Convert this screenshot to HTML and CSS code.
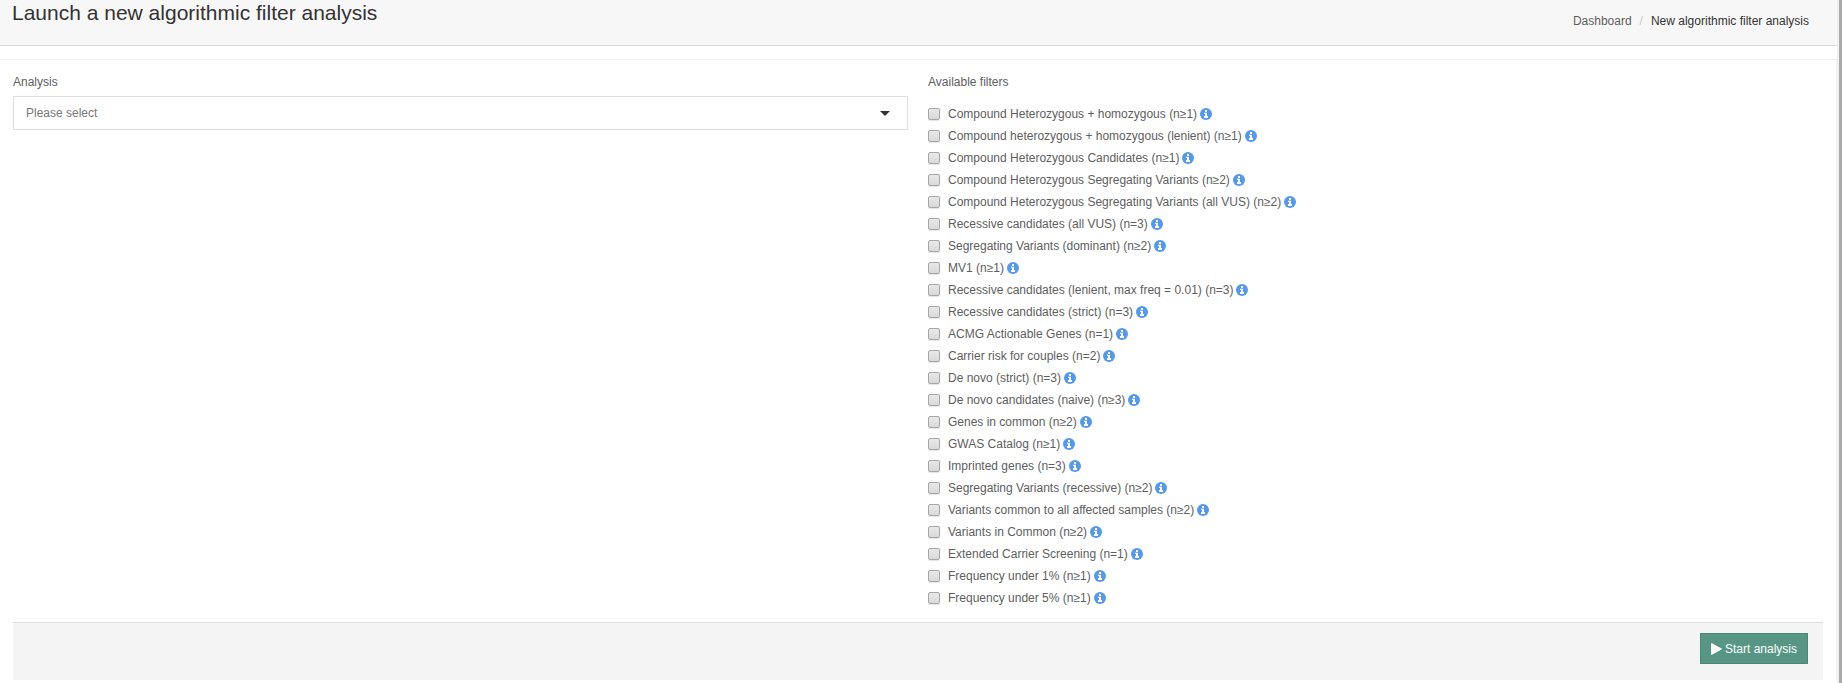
FILE: index.html
```html
<!DOCTYPE html>
<html lang="en">
<head>
    <meta charset="UTF-8">
    <meta name="viewport" content="width=device-width, initial-scale=1.0">
    <title>New algorithmic filter analysis</title>
    <link rel="stylesheet" href="styles.css">
</head>
<body>
    <!-- Info icon shared by all filters -->
    <svg class="sprite" aria-hidden="true">
        <symbol id="info" viewBox="0 0 12 12">
            <circle cx="6" cy="6" r="6" fill="#5499f0"/>
            <path fill="#fff" d="M5 2h2v2H5zM4 4.700h3v3.300h1v2H4V8h1V6H4z"/>
        </symbol>
    </svg>

    <div class="page">
        <header class="page-header">
            <h1>Launch a new algorithmic filter analysis</h1>
            <nav class="breadcrumb">
                <a href="#">Dashboard</a>
                <span class="separator">/</span>
                <span class="active">New algorithmic filter analysis</span>
            </nav>
        </header>

        <form class="panel" action="#" method="POST">
            <div class="columns">
                <!-- Analysis Section -->
                <div class="column">
                    <label class="title" for="analysis">Analysis</label>
                    <div class="select-box">
                        <select id="analysis" name="analysis">
                            <option value="">Please select</option>
                        </select>
                        <svg class="caret" viewBox="0 0 10 5" aria-hidden="true"><path d="M0 0h10L5 5z"/></svg>
                    </div>
                </div>

                <!-- Filters Section -->
                <fieldset class="column">
                    <legend class="title">Available filters</legend>
                    <ul class="filters">
                        <li><label><input type="checkbox" name="filter"> Compound Heterozygous + homozygous (n≥1)</label><svg class="info"><use href="#info"/></svg></li>
                        <li><label><input type="checkbox" name="filter"> Compound heterozygous + homozygous (lenient) (n≥1)</label><svg class="info"><use href="#info"/></svg></li>
                        <li><label><input type="checkbox" name="filter"> Compound Heterozygous Candidates (n≥1)</label><svg class="info"><use href="#info"/></svg></li>
                        <li><label><input type="checkbox" name="filter"> Compound Heterozygous Segregating Variants (n≥2)</label><svg class="info"><use href="#info"/></svg></li>
                        <li><label><input type="checkbox" name="filter"> Compound Heterozygous Segregating Variants (all VUS) (n≥2)</label><svg class="info"><use href="#info"/></svg></li>
                        <li><label><input type="checkbox" name="filter"> Recessive candidates (all VUS) (n=3)</label><svg class="info"><use href="#info"/></svg></li>
                        <li><label><input type="checkbox" name="filter"> Segregating Variants (dominant) (n≥2)</label><svg class="info"><use href="#info"/></svg></li>
                        <li><label><input type="checkbox" name="filter"> MV1 (n≥1)</label><svg class="info"><use href="#info"/></svg></li>
                        <li><label><input type="checkbox" name="filter"> Recessive candidates (lenient, max freq = 0.01) (n=3)</label><svg class="info"><use href="#info"/></svg></li>
                        <li><label><input type="checkbox" name="filter"> Recessive candidates (strict) (n=3)</label><svg class="info"><use href="#info"/></svg></li>
                        <li><label><input type="checkbox" name="filter"> ACMG Actionable Genes (n=1)</label><svg class="info"><use href="#info"/></svg></li>
                        <li><label><input type="checkbox" name="filter"> Carrier risk for couples (n=2)</label><svg class="info"><use href="#info"/></svg></li>
                        <li><label><input type="checkbox" name="filter"> De novo (strict) (n=3)</label><svg class="info"><use href="#info"/></svg></li>
                        <li><label><input type="checkbox" name="filter"> De novo candidates (naive) (n≥3)</label><svg class="info"><use href="#info"/></svg></li>
                        <li><label><input type="checkbox" name="filter"> Genes in common (n≥2)</label><svg class="info"><use href="#info"/></svg></li>
                        <li><label><input type="checkbox" name="filter"> GWAS Catalog (n≥1)</label><svg class="info"><use href="#info"/></svg></li>
                        <li><label><input type="checkbox" name="filter"> Imprinted genes (n=3)</label><svg class="info"><use href="#info"/></svg></li>
                        <li><label><input type="checkbox" name="filter"> Segregating Variants (recessive) (n≥2)</label><svg class="info"><use href="#info"/></svg></li>
                        <li><label><input type="checkbox" name="filter"> Variants common to all affected samples (n≥2)</label><svg class="info"><use href="#info"/></svg></li>
                        <li><label><input type="checkbox" name="filter"> Variants in Common (n≥2)</label><svg class="info"><use href="#info"/></svg></li>
                        <li><label><input type="checkbox" name="filter"> Extended Carrier Screening (n=1)</label><svg class="info"><use href="#info"/></svg></li>
                        <li><label><input type="checkbox" name="filter"> Frequency under 1% (n≥1)</label><svg class="info"><use href="#info"/></svg></li>
                        <li><label><input type="checkbox" name="filter"> Frequency under 5% (n≥1)</label><svg class="info"><use href="#info"/></svg></li>
                    </ul>
                </fieldset>
            </div>

            <div class="form-actions">
                <button type="submit" class="btn">
                    <svg class="play" viewBox="0 0 11 12" aria-hidden="true"><path d="M0 .7Q0-.3 1 .2l9.500 5.200q.9.600 0 1.200L1 11.800q-1 .5-1-.5z"/></svg>
                    Start analysis
                </button>
            </div>
        </form>
    </div>
</body>
</html>
```

FILE: styles.css
```css
* {
    box-sizing: border-box;
}

body {
    margin: 0;
    min-height: 100vh;
    display: flex;
    font-family: "Liberation Sans", Arial, sans-serif;
    font-size: 12px;
    line-height: 18px;
    color: #5e5e5e;
    background-color: #f0f0f0;
    border-right: 3px solid #a9a9a9;
}

.sprite {
    position: absolute;
    width: 0;
    height: 0;
}

.page {
    flex: 1;
    margin-right: 2px;
    background-color: #fff;
}

/* Header */
.page-header {
    display: flex;
    justify-content: space-between;
    height: 46px;
    padding: 0 28px 0 12px;
    background-color: #f7f7f7;
    border-bottom: 1px solid #dcdcdc;
}

.page-header h1 {
    margin: 0;
    font-size: 21px;
    font-weight: normal;
    line-height: 26px;
    color: #333;
}

.breadcrumb {
    display: flex;
    gap: 8px;
    padding-top: 12px;
}

.breadcrumb a {
    color: #5e5e5e;
    text-decoration: none;
}

.breadcrumb .separator {
    color: #ccc;
}

.breadcrumb .active {
    color: #333;
}

/* Form */
.panel {
    margin-top: 13px;
    padding: 13px 13px 0;
    border-top: 1px solid #f0f0f0;
    border-right: 1px solid #f0f0f0;
}

.columns {
    display: flex;
    gap: 20px;
}

.column {
    flex: 1;
    min-width: 0;
    margin: 0;
    padding: 0;
    border: none;
}

.title {
    display: block;
    padding: 0;
    margin-bottom: 5px;
}

.select-box {
    display: grid;
    align-items: center;
}

.select-box select,
.select-box .caret {
    grid-area: 1 / 1;
}

.select-box select {
    appearance: none;
    width: 100%;
    height: 34px;
    padding: 0 12px;
    font: inherit;
    color: #777;
    background-color: #fff;
    border: 1px solid #ddd;
    border-radius: 0;
}

.caret {
    justify-self: end;
    width: 10px;
    height: 5px;
    margin-right: 18px;
    fill: #333;
    pointer-events: none;
}

.filters {
    margin: 7px 0 0;
    padding: 0;
    list-style: none;
}

.filters li,
.filters label {
    display: flex;
    align-items: center;
    height: 22px;
}

.filters li {
    gap: 3px;
}

.filters label {
    gap: 8px;
}

.filters input {
    appearance: none;
    width: 12px;
    height: 12px;
    margin: 0;
    border: 1px solid #a6a6a6;
    border-radius: 2px;
    background-image: linear-gradient(#e8e8e8, #dadada);
    box-shadow: 0 1px 1px rgba(0, 0, 0, 0.1);
}

.filters input:checked {
    background: #5499f0;
}

.info {
    width: 12px;
    height: 12px;
}

/* Footer */
.form-actions {
    display: flex;
    justify-content: flex-end;
    margin-top: 13px;
    padding: 10px 15px 16px;
    background-color: #f4f4f4;
    border-top: 1px solid #dcdcdc;
}

.btn {
    display: flex;
    align-items: center;
    gap: 3px;
    height: 31px;
    padding: 0 10px;
    font: inherit;
    color: #fff;
    background-color: #579585;
    border: 1px solid #4d8677;
    cursor: pointer;
}

.play {
    width: 11px;
    height: 12px;
    fill: #fff;
}
```
